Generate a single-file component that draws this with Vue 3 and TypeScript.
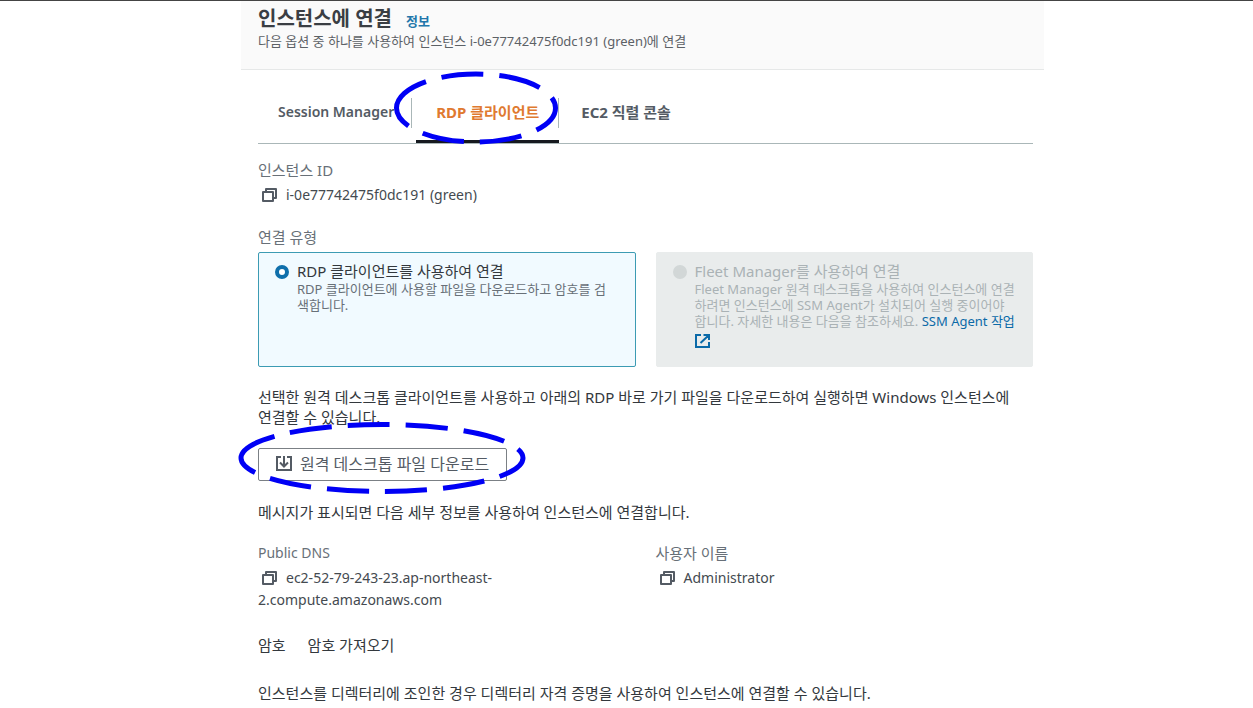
<script setup lang="ts">
import { ref } from 'vue'

const connection = ref<'rdp' | 'fleet'>('rdp')
const instanceId = 'i-0e77742475f0dc191 (green)'
const copyIcon = 'M4 4V1H14V10H11M1 4H11V13H1Z'
</script>

<template>
  <div class="page">
    <main class="panel">
      <header class="head">
        <div class="title-row">
          <h1>인스턴스에 연결</h1>
          <a class="info" href="#">정보</a>
        </div>
        <p class="subtitle">다음 옵션 중 하나를 사용하여 인스턴스 {{ instanceId }}에 연결</p>
      </header>

      <div class="body">
        <nav class="tabs" role="tablist">
          <button class="tab latin" type="button" role="tab">Session Manager</button>
          <button class="tab active" type="button" role="tab" aria-selected="true">
            <span>RDP 클라이언트</span>
            <svg class="mark mark-tab" width="166" height="74" viewBox="0 0 166 74" aria-hidden="true">
              <path d="M3.500 37A79.500 34 0 0 1 162.500 37A79.500 34 0 0 1 3.500 37" />
            </svg>
          </button>
          <button class="tab" type="button" role="tab">EC2 직렬 콘솔</button>
        </nav>

        <section class="field">
          <div class="label">인스턴스 ID</div>
          <div class="value">
            <button class="copy" type="button" aria-label="인스턴스 ID 복사">
              <svg width="15" height="14" viewBox="0 0 15 14"><path :d="copyIcon" /></svg>
            </button>{{ instanceId }}
          </div>
        </section>

        <div class="label type-label">연결 유형</div>
        <div class="cards">
          <div class="card selected">
            <input id="rdp" v-model="connection" type="radio" name="connection" value="rdp" />
            <div>
              <label for="rdp">RDP 클라이언트를 사용하여 연결</label>
              <p>RDP 클라이언트에 사용할 파일을 다운로드하고 암호를 검<br />색합니다.</p>
            </div>
          </div>
          <div class="card disabled">
            <input id="fleet" v-model="connection" type="radio" name="connection" value="fleet" disabled />
            <div>
              <label for="fleet">Fleet Manager를 사용하여 연결</label>
              <p>
                Fleet Manager 원격 데스크톱을 사용하여 인스턴스에 연결<br />하려면 인스턴스에 SSM Agent가 설치되어 실행 중이어야<br />합니다. 자세한 내용은 다음을 참조하세요.
                <a href="#">SSM Agent 작업<br />
                  <svg class="external" width="15" height="14" viewBox="0 0 15 14" aria-hidden="true">
                    <path d="M6 1H1V13H14V8M8.500 1H14V6M14 1L5.500 9" />
                  </svg>
                </a>
              </p>
            </div>
          </div>
        </div>

        <p class="text">선택한 원격 데스크톱 클라이언트를 사용하고 아래의 RDP 바로 가기 파일을 다운로드하여 실행하면 Windows 인스턴스에<br />연결할 수 있습니다.</p>

        <button class="download" type="button">
          <svg class="down" width="16" height="15" viewBox="0 0 16 15" aria-hidden="true">
            <path d="M5 1H1V14H15V1H11M8 0V10M4 6.500L8 10.500L12 6.500" />
          </svg>
          <span>원격 데스크톱 파일 다운로드</span>
          <svg class="mark mark-download" width="290" height="74" viewBox="0 0 290 74" aria-hidden="true">
            <path d="M4 37A141 33.500 0 0 1 286 37A141 33.500 0 0 1 4 37" />
          </svg>
        </button>

        <p class="text">메시지가 표시되면 다음 세부 정보를 사용하여 인스턴스에 연결합니다.</p>

        <div class="details">
          <section>
            <div class="label latin">Public DNS</div>
            <div class="value">
              <button class="copy" type="button" aria-label="Public DNS 복사">
                <svg width="15" height="14" viewBox="0 0 15 14"><path :d="copyIcon" /></svg>
              </button>ec2-52-79-243-23.ap-northeast-<br />2.compute.amazonaws.com
            </div>
          </section>
          <section>
            <div class="label">사용자 이름</div>
            <div class="value">
              <button class="copy" type="button" aria-label="사용자 이름 복사">
                <svg width="15" height="14" viewBox="0 0 15 14"><path :d="copyIcon" /></svg>
              </button>Administrator
            </div>
          </section>
        </div>

        <div class="password">
          <span>암호</span>
          <button type="button">암호 가져오기</button>
        </div>

        <p class="text">인스턴스를 디렉터리에 조인한 경우 디렉터리 자격 증명을 사용하여 인스턴스에 연결할 수 있습니다.</p>
      </div>
    </main>
  </div>
</template>

<style>
body {
  background: #fff;
}
</style>

<style scoped>
.page {
  display: grid;
  grid-template-columns: 241fr 803fr 209fr;
  border-top: 1px solid #444;
  font-family: "Noto Sans", "Noto Sans CJK KR", sans-serif;
  font-size: 15px;
  line-height: 20px;
  color: #33383d;
}
.page * {
  box-sizing: border-box;
}
h1,
p {
  margin: 0;
}
button {
  padding: 0;
  border: 0;
  background: none;
  font: inherit;
  color: inherit;
  white-space: nowrap;
}
a {
  color: #0b6aa8;
  text-decoration: none;
}
svg {
  fill: none;
  stroke: currentColor;
  stroke-width: 2;
}
.panel {
  grid-column: 2;
  min-width: 0;
}
.head {
  height: 69px;
  padding: 5px 17px 0;
  background: #fafafa;
  border-bottom: 1px solid #e6e8e8;
  white-space: nowrap;
}
.title-row {
  display: flex;
  align-items: baseline;
  gap: 14px;
  line-height: 26px;
}
h1 {
  font-size: 20px;
  font-weight: 700;
  line-height: 26px;
  color: #3a3e43;
}
.info {
  font-size: 13px;
  font-weight: 700;
  color: #2277ab;
}
.subtitle {
  font-size: 13px;
  line-height: 14px;
  color: #5c6166;
}
.body {
  padding: 0 11px 0 17px;
}
.tabs {
  display: flex;
  height: 74px;
  align-items: flex-end;
  border-bottom: 1px solid #aab7b8;
}
.tab {
  position: relative;
  height: 60px;
  padding: 0 20px 2px;
  font-weight: 700;
  color: #545b64;
}
.tab.latin {
  font-size: 14px;
  font-weight: 600;
}
.tab:first-child {
  margin-right: 4px;
  padding-right: 18px;
}
.tab:last-child {
  margin-left: 2px;
}
.tab:not(:last-child)::after {
  content: "";
  position: absolute;
  top: 15px;
  right: 0;
  width: 1px;
  height: 30px;
  background: #aab7b8;
}
.tab.active {
  color: #e07a30;
  box-shadow: inset 0 -3px #16191f;
}
.mark {
  position: absolute;
  z-index: 1;
  pointer-events: none;
  stroke: #0000f5;
  stroke-width: 5;
  stroke-dasharray: 42 16;
}
.mark-tab {
  left: -23px;
  top: -12px;
}
.label {
  color: #687078;
  white-space: nowrap;
}
.label.latin {
  font-size: 14px;
}
.field {
  margin-top: 16px;
}
.value {
  margin-top: 4px;
  font-size: 14px;
  line-height: 22px;
  color: #444a50;
  white-space: nowrap;
}
.copy {
  margin: 0 9px 2px 4px;
  vertical-align: middle;
  line-height: 14px;
  color: #545b64;
}
.copy svg {
  display: block;
  stroke-linejoin: round;
}
.type-label {
  margin: 21px 0 5px;
}
.cards {
  display: grid;
  grid-template-columns: repeat(2, minmax(0, 1fr));
  gap: 20px;
}
.card {
  display: flex;
  gap: 8px;
  height: 115px;
  padding: 8px 16px;
  border: 1px solid #3c9bb3;
  border-radius: 2px;
  background: #f1faff;
  white-space: nowrap;
}
.card.disabled {
  background: #e9ecec;
  border-color: #e9ecec;
  color: #aab2b5;
}
.card input {
  appearance: none;
  flex: none;
  width: 14px;
  height: 14px;
  margin: 4px 0 0;
  border: 4px solid #0f6fab;
  border-radius: 50%;
  background: #fff;
}
.card.disabled input {
  border-color: #d2d7d7;
  background: #d2d7d7;
}
.card label {
  display: block;
}
.card p {
  font-size: 13px;
  line-height: 16px;
  color: #687078;
}
.card.disabled p {
  color: #aab2b5;
}
.external {
  margin-top: 5px;
}
.text {
  margin-top: 20px;
  white-space: nowrap;
}
.download {
  position: relative;
  display: flex;
  align-items: center;
  gap: 8px;
  height: 33px;
  margin: 21px 0;
  padding: 0 17px 2px;
  border: 1px solid #7b8085;
  border-radius: 2px;
  font-size: 16px;
  color: #545b64;
}
.mark-download {
  left: -22px;
  top: -28px;
}
.details {
  display: grid;
  grid-template-columns: repeat(2, minmax(0, 1fr));
  gap: 20px;
  margin-top: 21px;
}
.password {
  display: flex;
  gap: 22px;
  margin: 24px 0 28px;
}
</style>
